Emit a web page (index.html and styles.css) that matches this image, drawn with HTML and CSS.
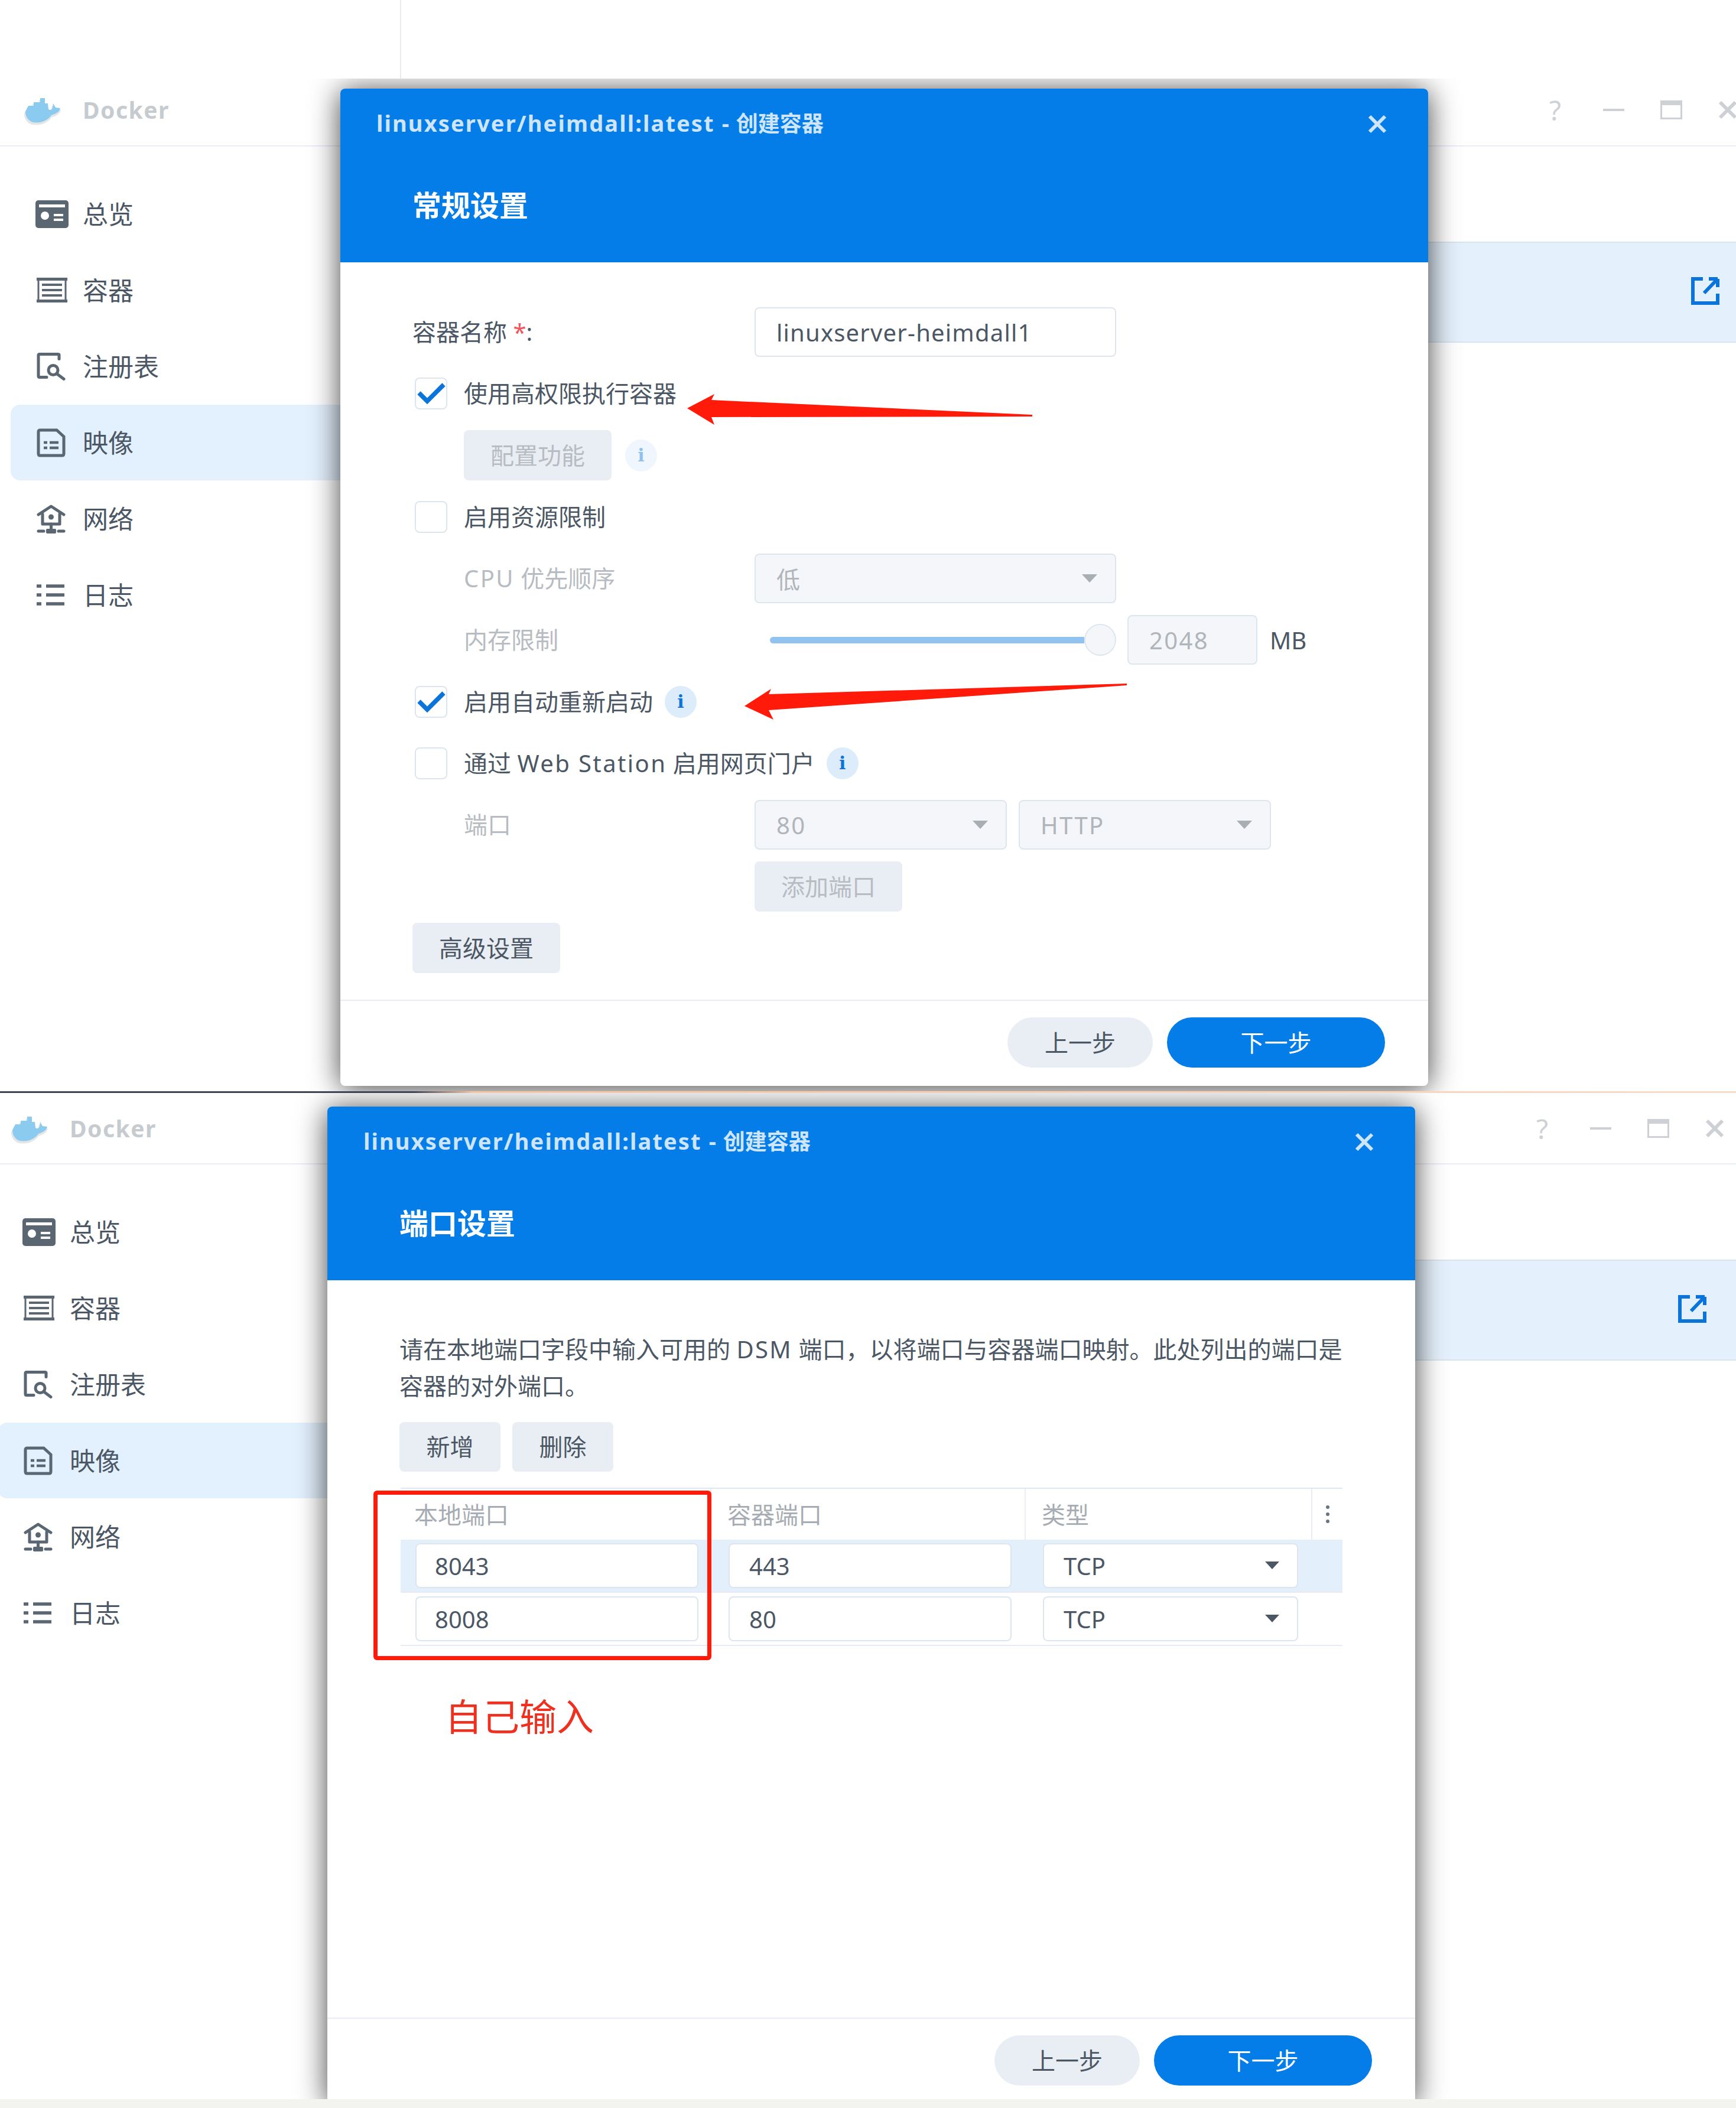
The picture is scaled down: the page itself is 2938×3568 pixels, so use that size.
FILE: index.html
```html
<!DOCTYPE html>
<html lang="zh-CN">
<head>
  <meta charset="UTF-8">
  <title>Docker - 创建容器</title>
  <link rel="stylesheet" href="styles.css">
</head>
<body>

<svg class="defs" width="0" height="0">
  <symbol id="i-whale" viewBox="0 0 66 50">
    <path fill="#e3e5e7" d="M1 27 L6 17 H15 V11 H26 V4 H34 V13 H39 L40 23 C43 25 46 24 47 20 L48 13 L52 20 L63 21 C61 30 52 32 47 34 C40 44 28 48 15 46 C6 44 1 36 1 27Z"/>
    <path fill="#8ccbf0" d="M3 24 L8 14 H17 V8 H28 V1 H36 V10 H41 L42 20 C45 22 48 21 49 17 L50 10 L54 17 L62 18 C60 26 52 28 47 30 C40 40 28 44 16 42 C8 40 3 32 3 24Z"/>
  </symbol>
  <symbol id="i-overview" viewBox="0 0 56 47">
    <rect width="56" height="47" rx="5" fill="#5a6672"/>
    <rect x="6" y="7" width="44" height="5" fill="#fff"/>
    <circle cx="16" cy="26" r="7" fill="#fff"/>
    <path d="M31 25 H47 M31 33 H47" stroke="#fff" stroke-width="4"/>
  </symbol>
  <symbol id="i-container" viewBox="0 0 52 42">
    <path d="M0 2.5 H52 M0 39.5 H52" stroke="#5a6672" stroke-width="5"/>
    <path d="M3 2 V40 M49 2 V40" stroke="#5a6672" stroke-width="3"/>
    <path d="M9 12 H43 M9 21 H43 M9 30 H43" stroke="#5a6672" stroke-width="4"/>
  </symbol>
  <symbol id="i-registry" viewBox="0 0 49 48">
    <g fill="none" stroke="#5a6672" stroke-width="5" stroke-linecap="round">
      <path d="M38 11 V4 Q38 3 36 3 H5 Q3 3 3 5 V40 Q3 42 5 42 H17"/>
      <circle cx="28" cy="30" r="8"/>
      <path d="M34 36 L46 45"/>
    </g>
  </symbol>
  <symbol id="i-image" viewBox="0 0 49 49">
    <path d="M6 3 H34 L46 14 V43 Q46 46 43 46 H6 Q3 46 3 43 V6 Q3 3 6 3Z" fill="none" stroke="#5a6672" stroke-width="5"/>
    <path d="M12 24 H18 M12 33 H18 M22 24 H37 M22 33 H37" stroke="#5a6672" stroke-width="4.5"/>
  </symbol>
  <symbol id="i-network" viewBox="0 0 49 49">
    <g fill="none" stroke="#5a6672" stroke-width="5" stroke-linecap="round" stroke-linejoin="round">
      <path d="M3 17 L24.5 3 L46 17"/>
      <path d="M10 16 V33 H39 V16"/>
      <path d="M24.5 33 V42"/>
      <path d="M3 45 H12 M37 45 H46"/>
    </g>
    <circle cx="24.5" cy="21" r="4.5" fill="#5a6672"/>
    <rect x="16" y="41" width="17" height="8" rx="2" fill="#5a6672"/>
  </symbol>
  <symbol id="i-log" viewBox="0 0 47 36">
    <path d="M0 3 H8 M0 18 H8 M0 33 H8 M16 3 H47 M16 18 H47 M16 33 H47" stroke="#5a6672" stroke-width="5.5"/>
  </symbol>
  <symbol id="i-open" viewBox="0 0 48 47">
    <g fill="none" stroke="#0a74da" stroke-width="6">
      <path d="M20 3 H3 V44 H45 V28"/>
      <path d="M45 3 H30 M45 3 V17 M45 3 L22 27"/>
    </g>
  </symbol>
  <symbol id="i-check" viewBox="0 0 51 50">
    <path d="M5 24 L19 38 L47 10" fill="none" stroke="#0a74da" stroke-width="7.5"/>
  </symbol>
  <symbol id="i-close" viewBox="0 0 32 32">
    <path d="M3 3 L29 29 M29 3 L3 29" stroke="currentColor" stroke-width="6"/>
  </symbol>
</svg>

<div class="strip"></div>

<section class="window window-a">
  <div class="frame">
    <header class="titlebar">
      <svg class="whale"><use href="#i-whale"/></svg>
      <span class="app-name">Docker</span>
      <div class="controls">
        <span class="ctl-help">?</span>
        <span class="ctl-min"></span>
        <span class="ctl-max"></span>
        <svg class="ctl-close"><use href="#i-close"/></svg>
      </div>
    </header>
    <div class="panes">
      <nav class="nav">
        <a class="nav-item"><span class="nav-icon"><svg class="ico-overview"><use href="#i-overview"/></svg></span>总览</a>
        <a class="nav-item"><span class="nav-icon"><svg class="ico-container"><use href="#i-container"/></svg></span>容器</a>
        <a class="nav-item"><span class="nav-icon"><svg class="ico-registry"><use href="#i-registry"/></svg></span>注册表</a>
        <a class="nav-item active"><span class="nav-icon"><svg class="ico-image"><use href="#i-image"/></svg></span>映像</a>
        <a class="nav-item"><span class="nav-icon"><svg class="ico-network"><use href="#i-network"/></svg></span>网络</a>
        <a class="nav-item"><span class="nav-icon"><svg class="ico-log"><use href="#i-log"/></svg></span>日志</a>
      </nav>
      <main class="list">
        <div class="list-row"><svg class="open-link"><use href="#i-open"/></svg></div>
      </main>
    </div>

    <div class="modal">
      <div class="modal-head">
        <div class="modal-title">
          <span><span class="title-latin">linuxserver/heimdall:latest -</span> 创建容器</span>
          <svg class="modal-close"><use href="#i-close"/></svg>
        </div>
        <h2 class="modal-section">常规设置</h2>
      </div>

      <div class="modal-body form">
        <div class="row">
          <label class="row-label">容器名称 <span class="req">*</span>:</label>
          <div class="field field-wide">linuxserver-heimdall1</div>
        </div>
        <div class="row">
          <span class="check"><svg><use href="#i-check"/></svg></span>
          <span class="txt">使用高权限执行容器</span>
        </div>
        <div class="row row-sub">
          <button class="btn off">配置功能</button>
          <span class="info off">i</span>
        </div>
        <div class="row">
          <span class="check"></span>
          <span class="txt">启用资源限制</span>
        </div>
        <div class="row row-sub">
          <label class="row-label dim"><span class="latin">CPU</span> 优先顺序</label>
          <div class="field field-wide off">低<i class="caret"></i></div>
        </div>
        <div class="row row-sub">
          <label class="row-label dim">内存限制</label>
          <div class="slider"><span class="track"></span><span class="thumb"></span></div>
          <div class="field field-num off">2048</div>
          <span class="unit">MB</span>
        </div>
        <div class="row">
          <span class="check"><svg><use href="#i-check"/></svg></span>
          <span class="txt">启用自动重新启动</span>
          <span class="info">i</span>
        </div>
        <div class="row">
          <span class="check"></span>
          <span class="txt">通过 <span class="latin">Web Station</span> 启用网页门户</span>
          <span class="info">i</span>
        </div>
        <div class="row row-sub">
          <label class="row-label dim">端口</label>
          <div class="field field-half off">80<i class="caret"></i></div>
          <div class="field field-half off">HTTP<i class="caret"></i></div>
        </div>
        <div class="row row-sub">
          <span class="row-label"></span>
          <button class="btn off">添加端口</button>
        </div>
        <div class="row">
          <button class="btn">高级设置</button>
        </div>
      </div>

      <div class="modal-foot">
        <button class="pill">上一步</button>
        <button class="pill primary">下一步</button>
      </div>

      <svg class="marks" viewBox="0 0 1841 1688">
        <polygon fill="#ff1a0a" points="587,541 633,517 628,527 1171,552 1171,555 628,556 633,569"/>
        <polygon fill="#ff1a0a" points="684,1045 729,1016 725,1025 1331,1007 1331,1010 725,1052 733,1068"/>
      </svg>
    </div>
  </div>
</section>

<div class="seam"></div>

<section class="window window-b">
  <div class="frame">
    <header class="titlebar">
      <svg class="whale"><use href="#i-whale"/></svg>
      <span class="app-name">Docker</span>
      <div class="controls">
        <span class="ctl-help">?</span>
        <span class="ctl-min"></span>
        <span class="ctl-max"></span>
        <svg class="ctl-close"><use href="#i-close"/></svg>
      </div>
    </header>
    <div class="panes">
      <nav class="nav">
        <a class="nav-item"><span class="nav-icon"><svg class="ico-overview"><use href="#i-overview"/></svg></span>总览</a>
        <a class="nav-item"><span class="nav-icon"><svg class="ico-container"><use href="#i-container"/></svg></span>容器</a>
        <a class="nav-item"><span class="nav-icon"><svg class="ico-registry"><use href="#i-registry"/></svg></span>注册表</a>
        <a class="nav-item active"><span class="nav-icon"><svg class="ico-image"><use href="#i-image"/></svg></span>映像</a>
        <a class="nav-item"><span class="nav-icon"><svg class="ico-network"><use href="#i-network"/></svg></span>网络</a>
        <a class="nav-item"><span class="nav-icon"><svg class="ico-log"><use href="#i-log"/></svg></span>日志</a>
      </nav>
      <main class="list">
        <div class="list-row"><svg class="open-link"><use href="#i-open"/></svg></div>
      </main>
    </div>

    <div class="modal">
      <div class="modal-head">
        <div class="modal-title">
          <span><span class="title-latin">linuxserver/heimdall:latest -</span> 创建容器</span>
          <svg class="modal-close"><use href="#i-close"/></svg>
        </div>
        <h2 class="modal-section">端口设置</h2>
      </div>

      <div class="modal-body ports">
        <p class="hint">请在本地端口字段中输入可用的 <span class="latin">DSM</span> 端口，以将端口与容器端口映射。此处列出的端口是<br>容器的对外端口。</p>
        <div class="toolbar">
          <button class="btn btn-small">新增</button>
          <button class="btn btn-small">删除</button>
        </div>
        <div class="table">
          <div class="tr th">
            <div class="td">本地端口</div>
            <div class="td">容器端口</div>
            <div class="td">类型</div>
            <div class="td td-more"><i></i><i></i><i></i></div>
          </div>
          <div class="tr selected">
            <div class="td"><div class="field">8043</div></div>
            <div class="td"><div class="field">443</div></div>
            <div class="td"><div class="field">TCP<i class="caret"></i></div></div>
            <div class="td"></div>
          </div>
          <div class="tr">
            <div class="td"><div class="field">8008</div></div>
            <div class="td"><div class="field">80</div></div>
            <div class="td"><div class="field">TCP<i class="caret"></i></div></div>
            <div class="td"></div>
          </div>
          <div class="red-box"></div>
        </div>
        <div class="note">自己输入</div>
      </div>

      <div class="modal-foot">
        <button class="pill">上一步</button>
        <button class="pill primary">下一步</button>
      </div>
    </div>
  </div>
</section>

</body>
</html>
```

FILE: styles.css
```css
* {
  box-sizing: border-box;
}
body {
  margin: 0;
  width: 2938px;
  height: 3568px;
  overflow: hidden;
  background: #f3f3ef;
  color: #4b5764;
  font-family: "Noto Sans", "Noto Sans CJK SC", sans-serif;
  font-size: 40px;
}
.defs {
  position: absolute;
}
button {
  font: inherit;
  border: none;
}
.latin {
  letter-spacing: 2.4px;
}

/* blank band above the first window */
.strip {
  height: 133px;
  background: #fff;
  padding-left: 677px;
}
.strip::before {
  content: "";
  display: block;
  width: 2px;
  height: 100%;
  background: #e7ebf1;
}
.seam {
  height: 3px;
  background: linear-gradient(90deg, #3d4653 0, #3d4653 700px, #f6c6a3 800px, #f9dcc8 100%);
}

.window {
  overflow: hidden;
  background: #fff;
}
.window-a {
  height: 1714px;
}
.window-b {
  height: 1703px;
}
.frame {
  position: relative;
  width: 2960px;
  height: 100%;
}
.window-b .frame {
  margin-left: -22px;
}

/* title bar */
.titlebar {
  display: flex;
  align-items: center;
  padding: 0 20px 0 40px;
  border-bottom: 2px solid #e9eef5;
}
.window-a .titlebar {
  height: 115px;
  padding-bottom: 8px;
}
.window-b .titlebar {
  height: 121px;
}
.whale {
  width: 66px;
  height: 50px;
  margin-top: 9px;
}
.app-name {
  margin-left: 34px;
  color: #c6cbd0;
  font-weight: 700;
  font-size: 39px;
  letter-spacing: 1.5px;
}
.controls {
  margin-left: auto;
  display: flex;
  align-items: center;
  gap: 61px;
  color: #cdd1d5;
}
.ctl-help {
  width: 40px;
  text-align: center;
  font-size: 46px;
  line-height: 1;
}
.ctl-min {
  width: 36px;
  height: 4px;
  background: #cdd1d5;
}
.ctl-max {
  width: 37px;
  height: 32px;
  border: 3px solid #cdd1d5;
  border-top-width: 8px;
}
.ctl-close {
  width: 32px;
  height: 32px;
}

.panes {
  display: flex;
}

/* side menu */
.nav {
  width: 576px;
  padding: 50px 0 0 18px;
  flex: none;
}
.nav-item {
  display: flex;
  align-items: center;
  height: 128px;
  margin-bottom: 1px;
  padding: 0 0 4px 44px;
  font-size: 43px;
  border-radius: 16px 0 0 16px;
}
.nav-item.active {
  background: #e3f0fd;
}
.nav-icon {
  width: 78px;
  display: flex;
  align-items: center;
  margin-top: 4px;
}
.ico-overview {
  width: 56px;
  height: 47px;
  margin-left: -2px;
}
.ico-container {
  width: 52px;
  height: 42px;
}
.ico-registry,
.ico-image,
.ico-network {
  width: 49px;
  height: 49px;
}
.ico-log {
  width: 47px;
  height: 36px;
}

/* list behind the dialog */
.list {
  flex: 1;
  padding-top: 161px;
}
.list-row {
  height: 171px;
  display: flex;
  align-items: center;
  background: #e4f0fb;
  border-top: 2px solid #d8e4ef;
  border-bottom: 2px solid #d8e4ef;
  padding: 0 0 4px 2286px;
}
.open-link {
  width: 48px;
  height: 47px;
}

/* dialog */
.modal {
  position: absolute;
  left: 576px;
  width: 1841px;
  height: 1688px;
  display: flex;
  flex-direction: column;
  background: #fff;
  border-radius: 8px;
  box-shadow: 0 4px 50px rgba(0, 0, 0, 0.75);
}
.window-a .modal {
  top: 17px;
}
.window-b .modal {
  top: 23px;
}
.modal-head {
  height: 294px;
  flex: none;
  background: #057de9;
  border-radius: 8px 8px 0 0;
  color: #fff;
}
.modal-title {
  height: 120px;
  padding: 0 70px 6px 61px;
  display: flex;
  align-items: center;
  justify-content: space-between;
  color: #cfe5fb;
  font-weight: 700;
  font-size: 37px;
}
.title-latin {
  font-size: 38px;
  letter-spacing: 2.15px;
}
.modal-close {
  width: 32px;
  height: 32px;
  margin-top: 6px;
}
.modal-section {
  margin: 0;
  padding: 44px 0 0 122px;
  font-size: 49px;
  line-height: 66px;
  font-weight: 700;
}
.modal-body {
  flex: 1;
  padding-left: 122px;
  padding-right: 123px;
}
.modal-foot {
  height: 146px;
  flex: none;
  display: flex;
  justify-content: flex-end;
  gap: 24px;
  padding: 28px 73px 0 0;
  border-top: 2px solid #e9eef5;
}
.pill {
  height: 85px;
  width: 246px;
  padding: 0 0 4px;
  border-radius: 43px;
  background: #e9eef4;
  color: #4b5764;
}
.pill.primary {
  width: 369px;
  background: #057de9;
  color: #fff;
}

/* general settings form */
.form {
  padding-top: 76px;
  display: flex;
  flex-direction: column;
  gap: 20.3px;
}
.row {
  display: flex;
  align-items: center;
  height: 84px;
  flex: none;
}
.row-sub {
  padding-left: 87px;
}
.row-label,
.txt {
  padding-bottom: 4px;
}
.row-label {
  width: 579px;
  flex: none;
}
.row-sub .row-label {
  width: 492px;
}
.dim {
  color: #b7bcc2;
}
.req {
  color: #f2545b;
}
.check {
  width: 55px;
  height: 54px;
  margin: 0 28px 0 4px;
  border: 2px solid #dde6ee;
  border-radius: 8px;
  flex: none;
}
.check svg {
  display: block;
  width: 51px;
  height: 50px;
}
.info {
  width: 54px;
  height: 54px;
  margin-left: 20px;
  border-radius: 50%;
  background: #dcecfb;
  color: #0a74da;
  font-family: "DejaVu Serif", serif;
  font-weight: 700;
  font-size: 30px;
  line-height: 54px;
  text-align: center;
}
.info.off {
  margin-left: 23px;
  background: #eff6fd;
  color: #8fc1f0;
}
.btn {
  height: 85px;
  width: 250px;
  padding: 0 0 4px;
  border-radius: 8px;
  background: #e9eef4;
  color: #4b5764;
}
.btn.off {
  color: #b7bcc2;
}
.field {
  position: relative;
  height: 84px;
  padding-left: 35px;
  display: flex;
  align-items: center;
  background: #fff;
  border: 2px solid #dde6ee;
  border-radius: 8px;
  letter-spacing: 1.2px;
}
.field.off {
  background: #f4f6f9;
  color: #b0b5bb;
  letter-spacing: 2.4px;
}
.field-wide {
  width: 612px;
}
.field-half {
  width: 427px;
  margin-right: 20px;
}
.field-num {
  width: 220px;
  margin: 0 21px 0 19px;
}
.caret {
  position: absolute;
  right: 30px;
  top: 50%;
  margin-top: -7px;
  border-style: solid;
  border-width: 14px 13px 0;
  border-color: #a9aeb3 transparent transparent;
}
.slider {
  width: 612px;
  flex: none;
  padding-left: 26px;
  display: flex;
  align-items: center;
}
.track {
  flex: 1;
  height: 11px;
  border-radius: 6px 0 0 6px;
  background: #90c3f0;
}
.thumb {
  width: 54px;
  height: 54px;
  border-radius: 50%;
  background: #f4f6f9;
  border: 2px solid #dde6ee;
}

/* port settings */
.ports {
  padding-top: 86px;
}
.hint {
  margin: 0 0 30px;
  line-height: 62px;
  white-space: nowrap;
}
.toolbar {
  display: flex;
  gap: 20px;
  margin-bottom: 27px;
}
.btn-small {
  width: 171px;
  height: 84px;
}
.table {
  position: relative;
  margin-left: 2px;
  border-top: 2px solid #dfe7ef;
}
.tr {
  display: grid;
  grid-template-columns: 526px 532px 485px 51px;
  height: 90px;
  border-bottom: 2px solid #e6ecf2;
}
.tr.th {
  height: 86px;
  color: #a6acb3;
  border-bottom: none;
}
.th .td {
  display: flex;
  align-items: center;
  padding: 0 0 3px 27px;
  border-right: 2px solid #e9eef5;
}
.th .td:first-child {
  padding-left: 23px;
}
.th .td:last-child {
  border-right: none;
}
.th .td-more {
  flex-direction: column;
  align-items: flex-start;
  justify-content: center;
  gap: 6px;
  padding: 0 0 0 23px;
}
.td-more i {
  width: 6px;
  height: 6px;
  border-radius: 50%;
  background: #6a7581;
}
.tr.selected {
  background: #e3f0fc;
}
.tr:not(.th) .td {
  padding: 6px 24px 0 29px;
}
.tr:not(.th) .td:first-child {
  padding: 6px 22px 0 25px;
}
.tr .field {
  height: 76px;
  padding-left: 33px;
  letter-spacing: 0;
}
.tr .td:first-child .field {
  padding-left: 31px;
}
.tr .caret {
  border-color: #4b5764 transparent transparent;
  border-width: 13px 12px 0;
  right: 30px;
}
.red-box {
  position: absolute;
  left: -46px;
  top: 3px;
  width: 572px;
  height: 287px;
  border: 7px solid #ff1a0a;
  border-radius: 6px;
}
.note {
  margin: 84px 0 0 77px;
  color: #f0301f;
  font-size: 63px;
  line-height: 70px;
}

/* red arrows drawn on top of the screenshot */
.marks {
  position: absolute;
  left: 0;
  top: 0;
  width: 1841px;
  height: 1688px;
  pointer-events: none;
}
```
